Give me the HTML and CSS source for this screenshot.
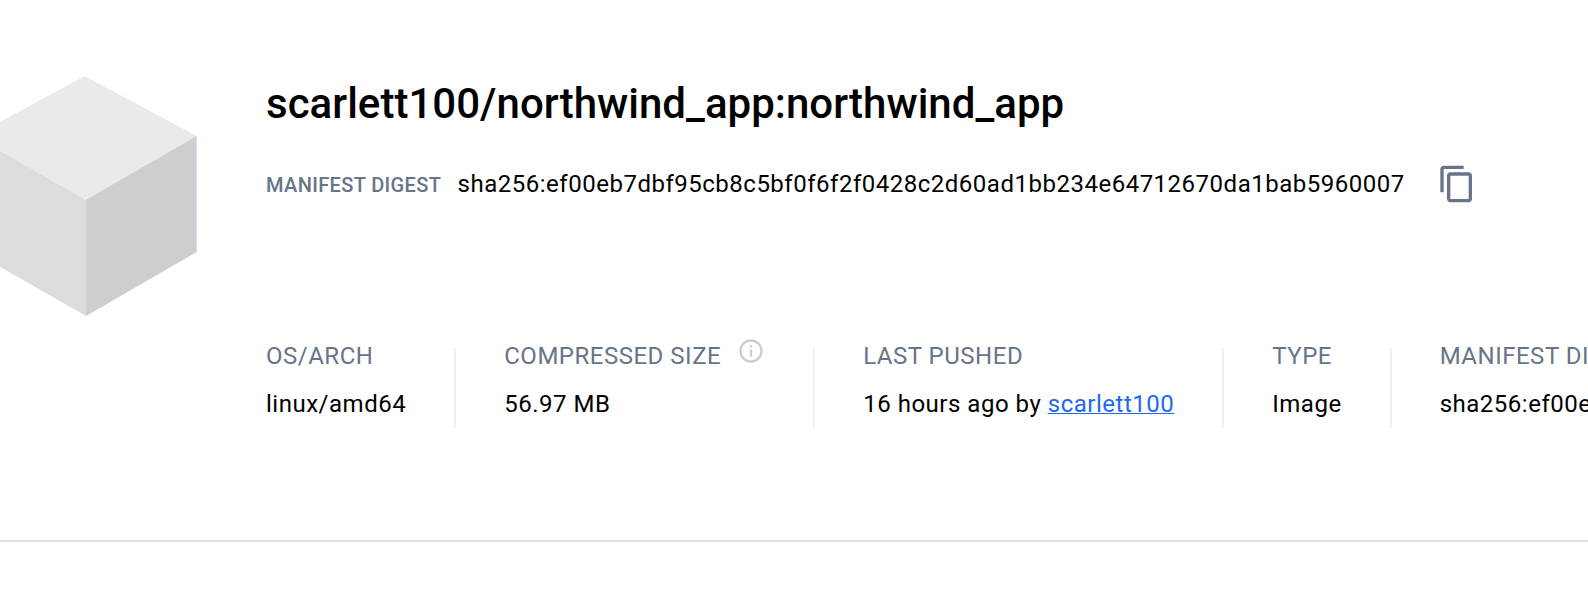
FILE: index.html
```html
<!DOCTYPE html>
<html lang="en">
<head>
<meta charset="utf-8">
<title>scarlett100/northwind_app:northwind_app</title>
<link rel="stylesheet" href="styles.css">
</head>
<body>
<header class="image-header">
  <svg class="cube" viewBox="-26 76 223 240" aria-hidden="true">
    <path fill="#e8eaeb" d="M84.5 76 196.7 136 86 200-26 136z"/>
    <path fill="#dbdcde" d="M-26 136 86 200V316L-26 252z"/>
    <path fill="#cbcfd2" d="M196.7 136V252L86 316V199.7z"/>
  </svg>
  <div class="details">
    <h1 class="title">scarlett100/northwind_app:northwind_app</h1>
    <div class="digest">
      <span class="digest-label">MANIFEST DIGEST</span>
      <span class="digest-value">sha256:ef00eb7dbf95cb8c5bf0f6f2f0428c2d60ad1bb234e64712670da1bab5960007</span>
      <svg class="copy-icon" viewBox="0 0 24 24" aria-hidden="true"><path d="M16 1H4c-1.1 0-2 .9-2 2v14h2V3h12V1zm3 4H8c-1.1 0-2 .9-2 2v14c0 1.1.9 2 2 2h11c1.1 0 2-.9 2-2V7c0-1.1-.9-2-2-2zm0 16H8V7h11v14z"/></svg>
    </div>
    <div class="stats">
      <div class="stat"><div class="stat-label">OS/ARCH</div><div class="stat-value">linux/amd64</div></div>
      <div class="stat"><div class="stat-label">COMPRESSED SIZE<svg class="info-icon" viewBox="0 0 24 24" aria-hidden="true"><path d="M11 7h2v2h-2zm0 4h2v6h-2zm1-9C6.48 2 2 6.48 2 12s4.48 10 10 10 10-4.48 10-10S17.52 2 12 2zm0 18c-4.41 0-8-3.59-8-8s3.59-8 8-8 8 3.59 8 8-3.59 8-8 8z"/></svg></div><div class="stat-value">56.97 MB</div></div>
      <div class="stat"><div class="stat-label">LAST PUSHED</div><div class="stat-value">16 hours ago by <a class="user-link" href="#">scarlett100</a></div></div>
      <div class="stat"><div class="stat-label">TYPE</div><div class="stat-value">Image</div></div>
      <div class="stat"><div class="stat-label">MANIFEST DIGEST</div><div class="stat-value">sha256:ef00eb7dbf95</div></div>
    </div>
  </div>
</header>
</body>
</html>
```
FILE: styles.css
```css
body {
  margin: 0;
  background: #fff;
  color: #000;
  font-family: Roboto, sans-serif;
  overflow: hidden;
}
.image-header {
  display: flex;
  box-sizing: border-box;
  height: 542px;
  padding-top: 76px;
  border-bottom: 2px solid #e1e2e6;
  overflow: hidden;
}
.cube {
  flex: none;
  width: 223px;
  height: 240px;
  margin-left: -26px;
}
.details {
  flex: none;
  margin-left: 69px;
}
.title {
  margin: 3px 0 0;
  font-size: 42px;
  line-height: 50px;
  font-weight: 500;
  letter-spacing: 0.025px;
}
.digest {
  display: flex;
  align-items: center;
  height: 40px;
  margin-top: 35px;
  white-space: nowrap;
}
.digest-label {
  width: 191.6px;
  padding-top: 2px;
  box-sizing: border-box;
  color: #677489;
  font-size: 20px;
  font-weight: 500;
  letter-spacing: 0.36px;
}
.digest-value {
  width: 979.4px;
  font-size: 24px;
  letter-spacing: 0.508px;
}
.copy-icon {
  width: 40px;
  height: 40px;
  fill: #677489;
}
.stats {
  display: flex;
  height: 80px;
  margin-top: 144px;
}
.stat {
  flex: none;
  padding-right: 48px;
  white-space: nowrap;
  font-size: 24px;
  letter-spacing: 0.512px;
}
.stat + .stat {
  padding-left: 48px;
  border-left: 2px solid #f0f0f0;
}
.stat-label {
  display: flex;
  height: 48px;
  margin-top: -16px;
  line-height: 48px;
  color: #677489;
}
.stat-value {
  line-height: 48px;
}
.info-icon {
  width: 28px;
  height: 28px;
  margin: 5px 0 0 16px;
  fill: #ccc;
}
.user-link {
  color: #2169f3;
  text-decoration-thickness: 1px;
}
```
